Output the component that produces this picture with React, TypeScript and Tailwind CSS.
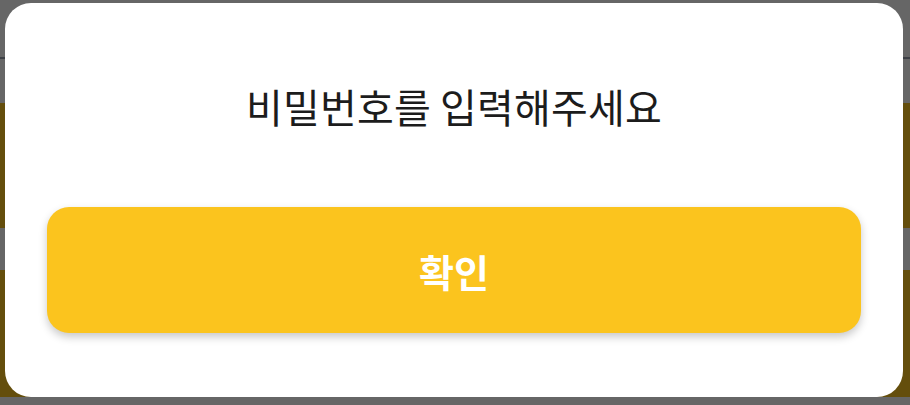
import React from 'react';

const App: React.FC = () => {
  return (
    <div
      className="relative h-[405px] w-[910px] overflow-hidden bg-white"
      style={{ fontFamily: '"Noto Sans CJK KR", "Noto Sans", sans-serif' }}
    >
      {/* page behind the dialog */}
      <div className="flex flex-col">
        <div className="flex h-[103px] flex-col">
          <div className="h-[59px] border-b-2 border-gray-400" />
        </div>
        <div className="h-[125px] bg-[#fbc41e]" />
        <div className="h-[42px] bg-white" />
        <div className="h-[127px] bg-[#fbc41e]" />
        <div className="h-[8px] bg-white" />
      </div>

      {/* dim overlay */}
      <div className="absolute inset-0 bg-black/60" />

      {/* dialog */}
      <div className="absolute left-[5px] top-[3px] flex h-[394px] w-[898px] flex-col rounded-[26px] bg-white px-[42px]">
        <div className="flex h-[204px] items-center justify-center pt-[2px]">
          <h2 className="text-[40px] font-normal leading-none tracking-[0.2px] text-[#1c1c1c]">
            비밀번호를 입력해주세요
          </h2>
        </div>
        <button className="flex h-[126px] w-full items-center justify-center rounded-[22px] bg-[#fbc41e] text-[38px] font-bold text-white shadow-[0_4px_8px_rgba(0,0,0,0.22)]">
          확인
        </button>
      </div>
    </div>
  );
};

export default App;
